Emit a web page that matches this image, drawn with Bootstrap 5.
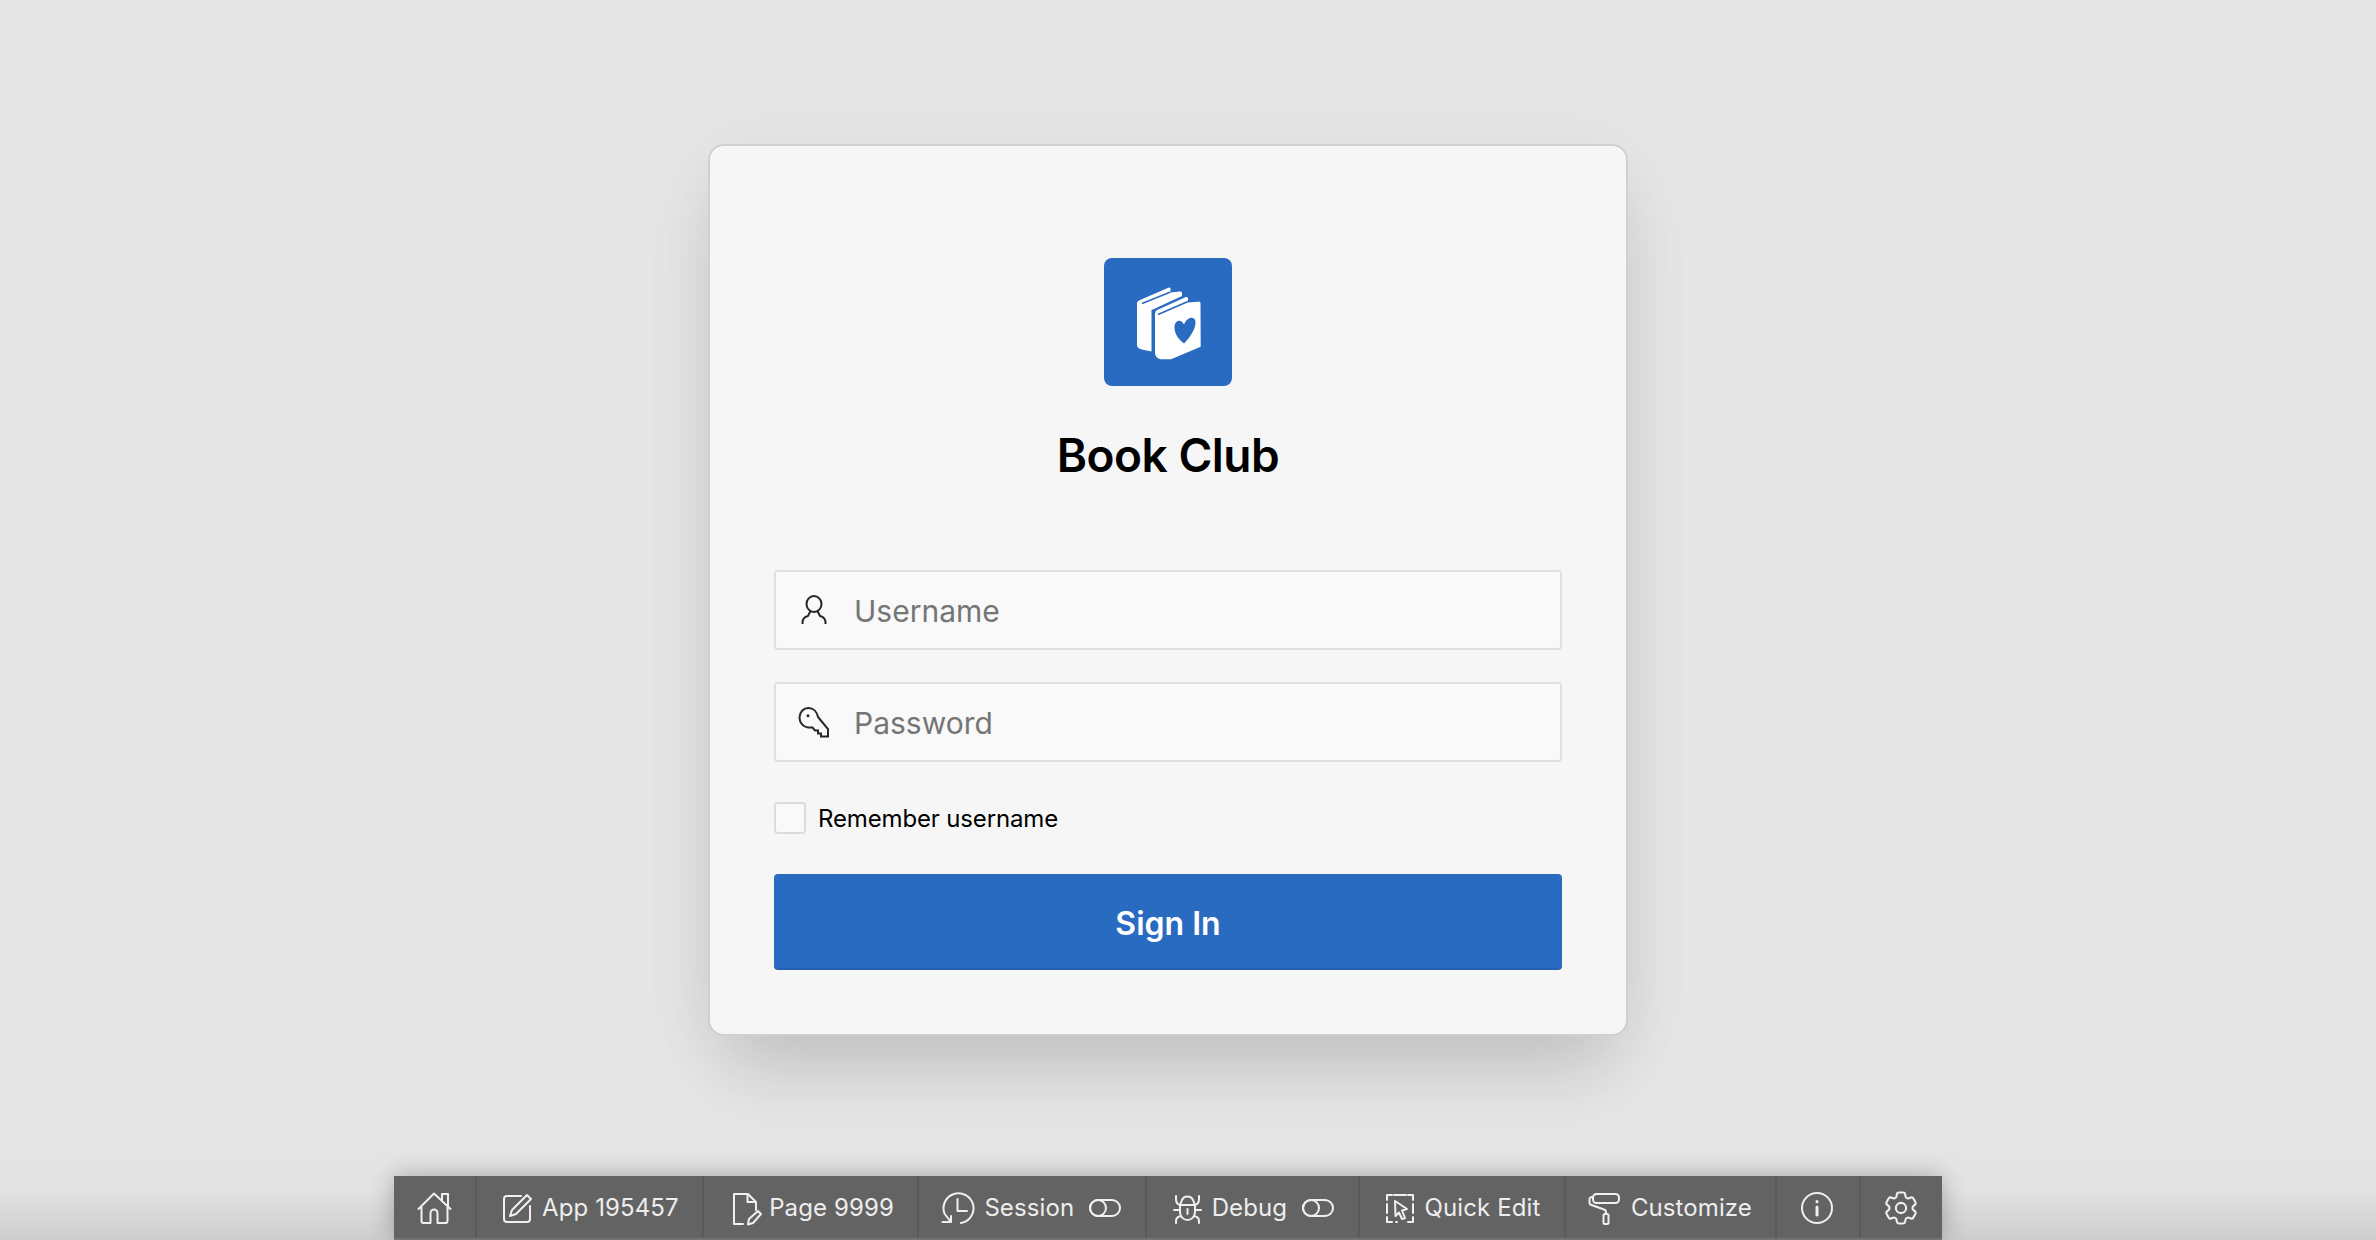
<!DOCTYPE html>
<html lang="en">
<head>
  <meta charset="UTF-8" />
  <title>Book Club - Sign In</title>
  <meta name="viewport" content="width=device-width, initial-scale=1" />
  <link rel="stylesheet" href="https://cdn.jsdelivr.net/npm/bootstrap@5.3.0/dist/css/bootstrap.min.css" />
  <style>
    html, body { height: 100%; }
    body {
      font-family: Inter, "Liberation Sans", sans-serif;
      color: #000;
      background: linear-gradient(to top, #cdcdcd 0, #e3e3e3 52px, #e6e6e6 120px) no-repeat;
      overflow: hidden;
      padding-right: 40px;
    }
    .login-main { padding-top: 144px; }
    .login-card {
      width: 920px;
      height: 892px;
      padding: 112px 64px 0;
      background: #f6f6f6;
      border: 2px solid #d0d0d0;
      border-radius: 16px;
      box-shadow: 0 48px 72px -16px rgba(0, 0, 0, .14), 0 8px 80px rgba(0, 0, 0, .05);
    }
    .logo-box {
      width: 128px;
      height: 128px;
      background: #2a6bc2;
      border-radius: 8px;
    }
    .login-title {
      font-size: 46px;
      font-weight: 600;
      line-height: 58px;
      margin: 40px 0 86px;
      letter-spacing: -.5px;
    }
    .login-field {
      height: 80px;
      padding-left: 22px;
      background: #f9f9f9;
      border: 2px solid #e0e0e0;
      border-radius: 4px;
      margin-bottom: 32px;
    }
    .login-field input {
      padding: 2px 0 0 24px;
      font-size: 30px;
      color: #000;
      background: transparent;
      border: 0;
      box-shadow: none;
    }
    .login-field input::placeholder { color: #757575; }
    .login-field svg { fill: none; stroke: #262626; stroke-width: 2; flex: none; }
    .remember-row { margin: 40px 0; height: 32px; }
    .remember-row input {
      width: 32px;
      height: 32px;
      margin: 0;
      background-color: #f9f9f9;
      border: 2px solid #dcdcdc;
      border-radius: 4px;
    }
    .remember-row label { font-size: 24px; margin-left: 12px; padding-top: 2px; letter-spacing: -.15px; }
    .signin-btn {
      height: 96px;
      padding: 6px 12px 0;
      font-size: 32px;
      font-weight: 600;
      color: #fff;
      background: #2a6bc2;
      border: 0;
      border-bottom: 2px solid #2560b0;
      border-radius: 4px;
    }
    .dev-toolbar {
      height: 64px;
      background: #636363;
      border-bottom: 2px solid #737373;
      box-shadow: 0 0 24px rgba(0, 0, 0, .28);
    }
    .tool-item {
      height: 62px;
      padding: 2px 23.5px 0 22px;
      gap: 7px;
      font-size: 24px;
      letter-spacing: .1px;
      color: #ededed;
      border-right: 2px solid #5a5a5a;
      text-decoration: none;
    }
    .tool-item:last-child { border-right: 0; }
    .tool-item svg { fill: none; stroke: #f0f0f0; stroke-width: 2; stroke-linecap: round; stroke-linejoin: round; flex: none; }
    .tool-item .tool-toggle { margin-left: 8px; }
  </style>
</head>
<body class="d-flex flex-column">
  <main class="login-main flex-grow-1 d-flex justify-content-center align-items-start">
    <div class="card login-card">
      <div class="logo-box mx-auto">
        <svg width="128" height="128" viewBox="0 0 128 128">
          <path fill="#fff" d="M33 45Q33 43 36 42L65 29.5Q66.500 29 66.500 31V34.500L76 33.500Q78 33 78 35V38L50 51L47.500 52V93.500L38 91.500Q33 90 33 87Z" />
          <path fill="none" stroke="#2a6bc2" stroke-width="1.700" d="M38 45.500L66.500 34" />
          <path fill="#fff" stroke="#2a6bc2" stroke-width="3.400" paint-order="stroke" d="M51 56Q51 53 53 52L82 39Q84 38.500 84 40.500V44.500L94 43.800Q96.500 43 96.500 45.500L96.700 88.700L67 101.300H57Q51 100 51 95Z" />
          <path fill="none" stroke="#2a6bc2" stroke-width="1.800" d="M54 56.500L84 43.500" />
          <path fill="#2a6bc2" d="M80 66.500C77 60.500 70.500 62 70.500 69.500C70.500 76 75 82 80 85.500C85.500 80 91.500 71.500 91.500 64.500C91.500 57.500 83 58.500 80 66.500Z" />
        </svg>
      </div>
      <h1 class="login-title text-center">Book Club</h1>
      <form>
        <div class="login-field d-flex align-items-center">
          <svg width="32" height="32" viewBox="0 0 32 32">
            <ellipse cx="16" cy="10" rx="7.500" ry="8" />
            <path d="M4.500 30V28.500Q4.500 23.500 10 22L12.500 17M27.500 30V28.500Q27.500 23.500 22 22L19.500 17" />
          </svg>
          <input type="text" class="form-control" placeholder="Username" aria-label="Username" />
        </div>
        <div class="login-field d-flex align-items-center">
          <svg width="32" height="32" viewBox="0 0 32 32">
            <path d="M10.500 2C5.500 2 1.500 6 1.500 11.500C1.500 17 5.500 21 10 21.500H14.500L17 24.500H20V27.500H23V30.500H30V23L20 11C19 6 15.500 2 10.500 2Z" />
            <circle cx="10" cy="9.700" r="1.500" fill="#262626" stroke="none" />
          </svg>
          <input type="password" class="form-control" placeholder="Password" aria-label="Password" />
        </div>
        <div class="remember-row d-flex align-items-center">
          <input class="form-check-input" type="checkbox" id="rememberMe" />
          <label for="rememberMe">Remember username</label>
        </div>
        <button type="button" class="btn signin-btn w-100">Sign In</button>
      </form>
    </div>
  </main>

  <div class="d-flex justify-content-center">
    <nav class="dev-toolbar d-flex">
      <a class="tool-item d-flex align-items-center" href="#" aria-label="Home">
        <svg width="36" height="36" viewBox="0 0 36 36">
          <path d="M2.500 19L18 3.500L34.500 19M26 11V4H32V17M5.500 17V31A2 2 0 0 0 7.500 33H14.500V23A3.500 3.500 0 0 1 21.500 23V33H29A2 2 0 0 0 31.500 31V17" />
        </svg>
      </a>
      <a class="tool-item d-flex align-items-center" href="#">
        <svg width="36" height="36" viewBox="0 0 36 36">
          <path d="M22 6H8A3 3 0 0 0 5 9V29A3 3 0 0 0 8 32H28A3 3 0 0 0 31 29V16M28 5L32 9L17 24L11 26L13 20Z" />
        </svg>
        App 195457
      </a>
      <a class="tool-item d-flex align-items-center" href="#">
        <svg width="36" height="36" viewBox="0 0 36 36">
          <path d="M17 34H8V4H22L30 12V20M21.500 4V12H29M22 34.500L23 29L32 21L35 24L27 33Z" />
        </svg>
        Page 9999
      </a>
      <a class="tool-item d-flex align-items-center" href="#">
        <svg width="36" height="36" viewBox="0 0 36 36">
          <path d="M20 33A15 15 0 1 0 3.700 24L10 32M1.500 32H10V26M16.500 9V21H26" />
        </svg>
        Session
        <svg class="tool-toggle" width="32" height="18" viewBox="0 0 32 18">
          <rect x="1" y="1" width="30" height="16" rx="8" />
          <circle cx="9" cy="9" r="8" />
        </svg>
      </a>
      <a class="tool-item d-flex align-items-center" href="#">
        <svg width="36" height="36" viewBox="0 0 36 36">
          <path d="M11 15H26M13 10A6 6 0 0 1 24 10L26 15V22C26 27 22 30 18.500 30C15 30 11 27 11 22V15ZM18.500 19V24M7 6V9Q7 14 11 15M30 6V9Q30 14 26 15M5 20H11M26 20H32M7 33V31Q7 27 12 26M30 33V31Q30 27 25 26" />
        </svg>
        Debug
        <svg class="tool-toggle" width="32" height="18" viewBox="0 0 32 18">
          <rect x="1" y="1" width="30" height="16" rx="8" />
          <circle cx="9" cy="9" r="8" />
        </svg>
      </a>
      <a class="tool-item d-flex align-items-center" href="#">
        <svg width="36" height="36" viewBox="0 0 36 36">
          <path d="M10 5H5V10M12 5H24M26 5H31V10M5 14V23M31 14V23M5 27V32H10M26 32H31V27M14 32H15M13 11L25 19L20 20.500L23 28L20 29L17 22.500L13.500 26Z" />
        </svg>
        Quick Edit
      </a>
      <a class="tool-item d-flex align-items-center" href="#">
        <svg width="36" height="36" viewBox="0 0 36 36">
          <rect x="5" y="4" width="26" height="9" rx="3.500" />
          <path d="M5 7H4A2.500 2.500 0 0 0 1.500 9.500V12.500A2.500 2.500 0 0 0 3.500 15L16 19.500Q18 20 18 22.500V24" />
          <rect x="15.500" y="24" width="5" height="10" rx="1.500" />
        </svg>
        Customize
      </a>
      <a class="tool-item d-flex align-items-center" href="#" aria-label="Info">
        <svg width="36" height="36" viewBox="0 0 36 36">
          <circle cx="18" cy="18" r="15" />
          <path stroke-width="3" d="M18 17V25M18 11.500V11.800" />
        </svg>
      </a>
      <a class="tool-item d-flex align-items-center" href="#" aria-label="Settings">
        <svg width="36" height="36" viewBox="1.500 1.500 21 21" style="stroke-width:1.200">
          <path d="M9.594 3.940c.09-.542.56-.94 1.110-.94h2.593c.55 0 1.020.398 1.110.94l.213 1.281c.063.374.313.686.645.870.074.04.147.083.22.127.325.196.72.257 1.075.124l1.217-.456a1.125 1.125 0 0 1 1.370.49l1.296 2.247a1.125 1.125 0 0 1-.26 1.431l-1.003.827c-.293.241-.438.613-.43.992a7.723 7.723 0 0 1 0 .255c-.008.378.137.75.43.991l1.004.827c.424.35.534.955.26 1.430l-1.298 2.247a1.125 1.125 0 0 1-1.369.491l-1.217-.456c-.355-.133-.75-.072-1.076.124a6.470 6.470 0 0 1-.22.128c-.331.183-.581.495-.644.869l-.213 1.281c-.09.543-.56.94-1.110.94h-2.594c-.55 0-1.019-.398-1.110-.94l-.213-1.281c-.062-.374-.312-.686-.644-.87a6.520 6.520 0 0 1-.22-.127c-.325-.196-.72-.257-1.076-.124l-1.217.456a1.125 1.125 0 0 1-1.369-.49l-1.297-2.247a1.125 1.125 0 0 1 .26-1.431l1.004-.827c.292-.24.437-.613.43-.991a6.932 6.932 0 0 1 0-.255c.007-.38-.138-.751-.43-.992l-1.004-.827a1.125 1.125 0 0 1-.26-1.430l1.297-2.247a1.125 1.125 0 0 1 1.370-.491l1.216.456c.356.133.751.072 1.076-.124.072-.044.146-.086.22-.128.332-.183.582-.495.644-.869l.214-1.280Z" />
          <circle cx="12" cy="12" r="3" />
        </svg>
      </a>
    </nav>
  </div>

  <script src="https://cdn.jsdelivr.net/npm/bootstrap@5.3.0/dist/js/bootstrap.bundle.min.js"></script>
</body>
</html>
